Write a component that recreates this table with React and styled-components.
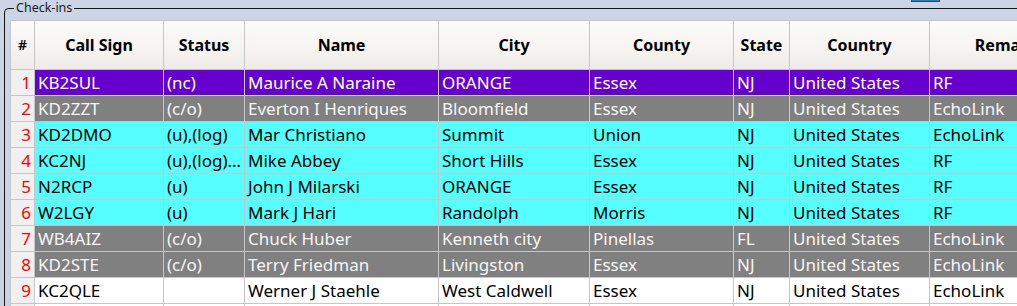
import React from "react";
import styled, { createGlobalStyle } from "styled-components";

const Global = createGlobalStyle`
  html, body { margin: 0; padding: 0; }
  body {
    width: 1017px;
    height: 306px;
    overflow: hidden;
    background: #c9d3e5;
    font-family: "Noto Sans", "Open Sans", sans-serif;
  }
`;

const Page = styled.div`
  position: relative;
  width: 1017px;
  height: 306px;
  overflow: hidden;
  background: linear-gradient(180deg, #cbd5e6 0%, #c8d2e4 100%);
`;

const EdgeButton = styled.div`
  position: absolute;
  top: -12px;
  left: 911px;
  width: 29px;
  height: 14px;
  background: #2c7db5;
  border: 1px solid #1d4f73;
  box-sizing: border-box;
`;

const Group = styled.fieldset`
  margin: 0 0 0 4px;
  padding: 0 0 0 5px;
  border: 1px solid #141414;
  border-right: none;
  border-bottom: none;
  border-radius: 5px 0 0 0;
  min-width: 0;
  width: 1040px;
  height: 330px;
  box-sizing: border-box;
`;

const Legend = styled.legend`
  margin-left: 4px;
  padding: 0 2px;
  font-size: 12.5px;
  line-height: 16px;
  color: #1a1a1a;
`;

const Table = styled.div`
  margin-top: 4px;
  display: flex;
  flex-direction: column;
  gap: 1px;
  background: #c6c6c6;
  border: 1px solid #c2c6cc;
  width: max-content;
`;

const COLS = "23px 128px 80px 193px 150px 143px 55px 139px 160px";

const HeaderRow = styled.div`
  display: grid;
  grid-template-columns: ${COLS};
  column-gap: 1px;
  height: 48px;
`;

const HeaderCell = styled.div`
  display: flex;
  align-items: center;
  justify-content: center;
  background: linear-gradient(180deg, #fcfbf9 0%, #f6f3f0 60%, #efebe7 100%);
  font-weight: ${(p) => (p.$plain ? 600 : 700)};
  font-size: ${(p) => (p.$plain ? "14px" : "16px")};
  color: #000;
  white-space: nowrap;
  overflow: hidden;
  padding-bottom: 1px;
`;

const TONES = {
  purple: { bg: "#6600cc", fg: "#ffffff" },
  grey: { bg: "#808080", fg: "#f6f6f6" },
  cyan: { bg: "#55ffff", fg: "#000000" },
  white: { bg: "#ffffff", fg: "#000000" },
};

const DataRow = styled.div`
  display: grid;
  grid-template-columns: ${COLS};
  column-gap: 1px;
  height: 25px;
  --bg: ${(p) => TONES[p.$tone].bg};
  --fg: ${(p) => TONES[p.$tone].fg};
`;

const RowNum = styled.div`
  background: #f0f0f0;
  color: #ff0000;
  font-size: 17px;
  line-height: 25px;
  text-align: right;
  padding-right: 3px;
`;

const Cell = styled.div`
  background: var(--bg);
  color: var(--fg);
  font-size: 17px;
  line-height: 25px;
  padding: 0 0 0 3px;
  white-space: nowrap;
  overflow: hidden;
`;

const headers = [
  "Call Sign",
  "Status",
  "Name",
  "City",
  "County",
  "State",
  "Country",
  "Remarks",
];

const rows = [
  { tone: "purple", d: ["KB2SUL", "(nc)", "Maurice A Naraine", "ORANGE", "Essex", "NJ", "United States", "RF"] },
  { tone: "grey", d: ["KD2ZZT", "(c/o)", "Everton I Henriques", "Bloomfield", "Essex", "NJ", "United States", "EchoLink"] },
  { tone: "cyan", d: ["KD2DMO", "(u),(log)", "Mar Christiano", "Summit", "Union", "NJ", "United States", "EchoLink"] },
  { tone: "cyan", d: ["KC2NJ", "(u),(log)…", "Mike Abbey", "Short Hills", "Essex", "NJ", "United States", "RF"] },
  { tone: "cyan", d: ["N2RCP", "(u)", "John J Milarski", "ORANGE", "Essex", "NJ", "United States", "RF"] },
  { tone: "cyan", d: ["W2LGY", "(u)", "Mark J Hari", "Randolph", "Morris", "NJ", "United States", "RF"] },
  { tone: "grey", d: ["WB4AIZ", "(c/o)", "Chuck Huber", "Kenneth city", "Pinellas", "FL", "United States", "EchoLink"] },
  { tone: "grey", d: ["KD2STE", "(c/o)", "Terry Friedman", "Livingston", "Essex", "NJ", "United States", "EchoLink"] },
  { tone: "white", d: ["KC2QLE", "", "Werner J Staehle", "West Caldwell", "Essex", "NJ", "United States", "EchoLink"] },
  { tone: "white", d: ["", "", "", "", "", "", "", ""], blank: true },
];

export default function App() {
  return (
    <Page>
      <Global />
      <EdgeButton />
      <Group>
        <Legend>Check-ins</Legend>
        <Table>
          <HeaderRow>
            <HeaderCell $plain>#</HeaderCell>
            {headers.map((h) => (
              <HeaderCell key={h}>{h}</HeaderCell>
            ))}
          </HeaderRow>
          {rows.map((r, i) => (
            <DataRow key={i} $tone={r.tone}>
              <RowNum>{r.blank ? "" : i + 1}</RowNum>
              {r.d.map((v, j) => (
                <Cell key={j}>{v}</Cell>
              ))}
            </DataRow>
          ))}
        </Table>
      </Group>
    </Page>
  );
}
